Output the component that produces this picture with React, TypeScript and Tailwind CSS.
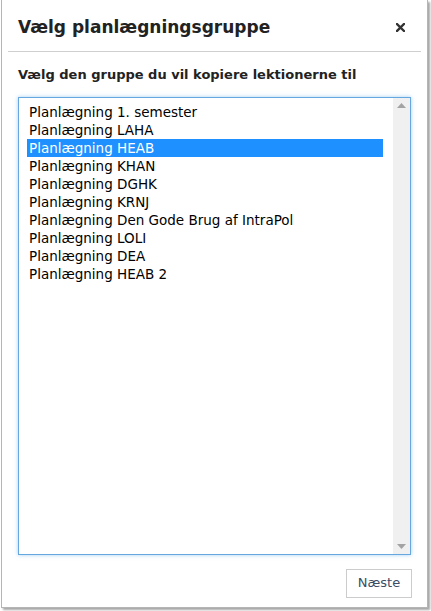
import React from "react";

const items = [
  "Planlægning 1. semester",
  "Planlægning LAHA",
  "Planlægning HEAB",
  "Planlægning KHAN",
  "Planlægning DGHK",
  "Planlægning KRNJ",
  "Planlægning Den Gode Brug af IntraPol",
  "Planlægning LOLI",
  "Planlægning DEA",
  "Planlægning HEAB 2",
];

export default function App() {
  return (
    <div
      className="w-[431px] h-[611px] bg-white relative"
      style={{ fontFamily: "Verdana, 'DejaVu Sans', sans-serif" }}
    >
      <div className="absolute left-[1px] top-0 w-[427px] h-[608px] border-l border-r border-b border-[#b5b5b5] bg-white shadow-[2px_2px_2px_rgba(0,0,0,0.35)] flex flex-col">
        <div className="mx-[6px] h-[52px] border-b border-[#cfcfcf] flex items-center justify-between pl-[10px] pr-[16px]">
          <span className="text-[17px] font-bold text-[#222] pt-[4px]">
            Vælg planlægningsgruppe
          </span>
          <svg width="9" height="9" viewBox="0 0 9 9" className="mt-[4px]">
            <path d="M1 1 L8 8 M8 1 L1 8" stroke="#333" strokeWidth="2.4" strokeLinecap="square" />
          </svg>
        </div>
        <div className="px-[16px] pt-[13px] text-[13px] font-bold text-[#222]">
          Vælg den gruppe du vil kopiere lektionerne til
        </div>
        <div className="mx-[16px] mt-[12px] h-[458px] border border-[#66a7e0] shadow-[0_0_4px_rgba(102,175,233,0.6)] flex">
          <div className="flex-1 pt-[5px] pl-[8px] pr-[10px]">
            {items.map((t, i) => (
              <div
                key={i}
                className={
                  "h-[18px] leading-[18px] text-[13.5px] pl-[2px] whitespace-nowrap " +
                  (i === 2 ? "bg-[#1e90ff] text-white" : "text-black")
                }
              >
                {t}
              </div>
            ))}
          </div>
          <div className="w-[17px] bg-[#f0f0f0] flex flex-col justify-between items-center py-[5px]">
            <svg width="9" height="5" viewBox="0 0 9 5">
              <path d="M0 5 L4.5 0 L9 5 Z" fill="#a3a3a3" />
            </svg>
            <svg width="9" height="5" viewBox="0 0 9 5">
              <path d="M0 0 L4.5 5 L9 0 Z" fill="#a3a3a3" />
            </svg>
          </div>
        </div>
        <div className="flex justify-end px-[15px] pt-[14px]">
          <button className="w-[66px] h-[29px] border border-[#cccccc] bg-white text-[13px] text-[#3b4d66]">
            Næste
          </button>
        </div>
      </div>
    </div>
  );
}
